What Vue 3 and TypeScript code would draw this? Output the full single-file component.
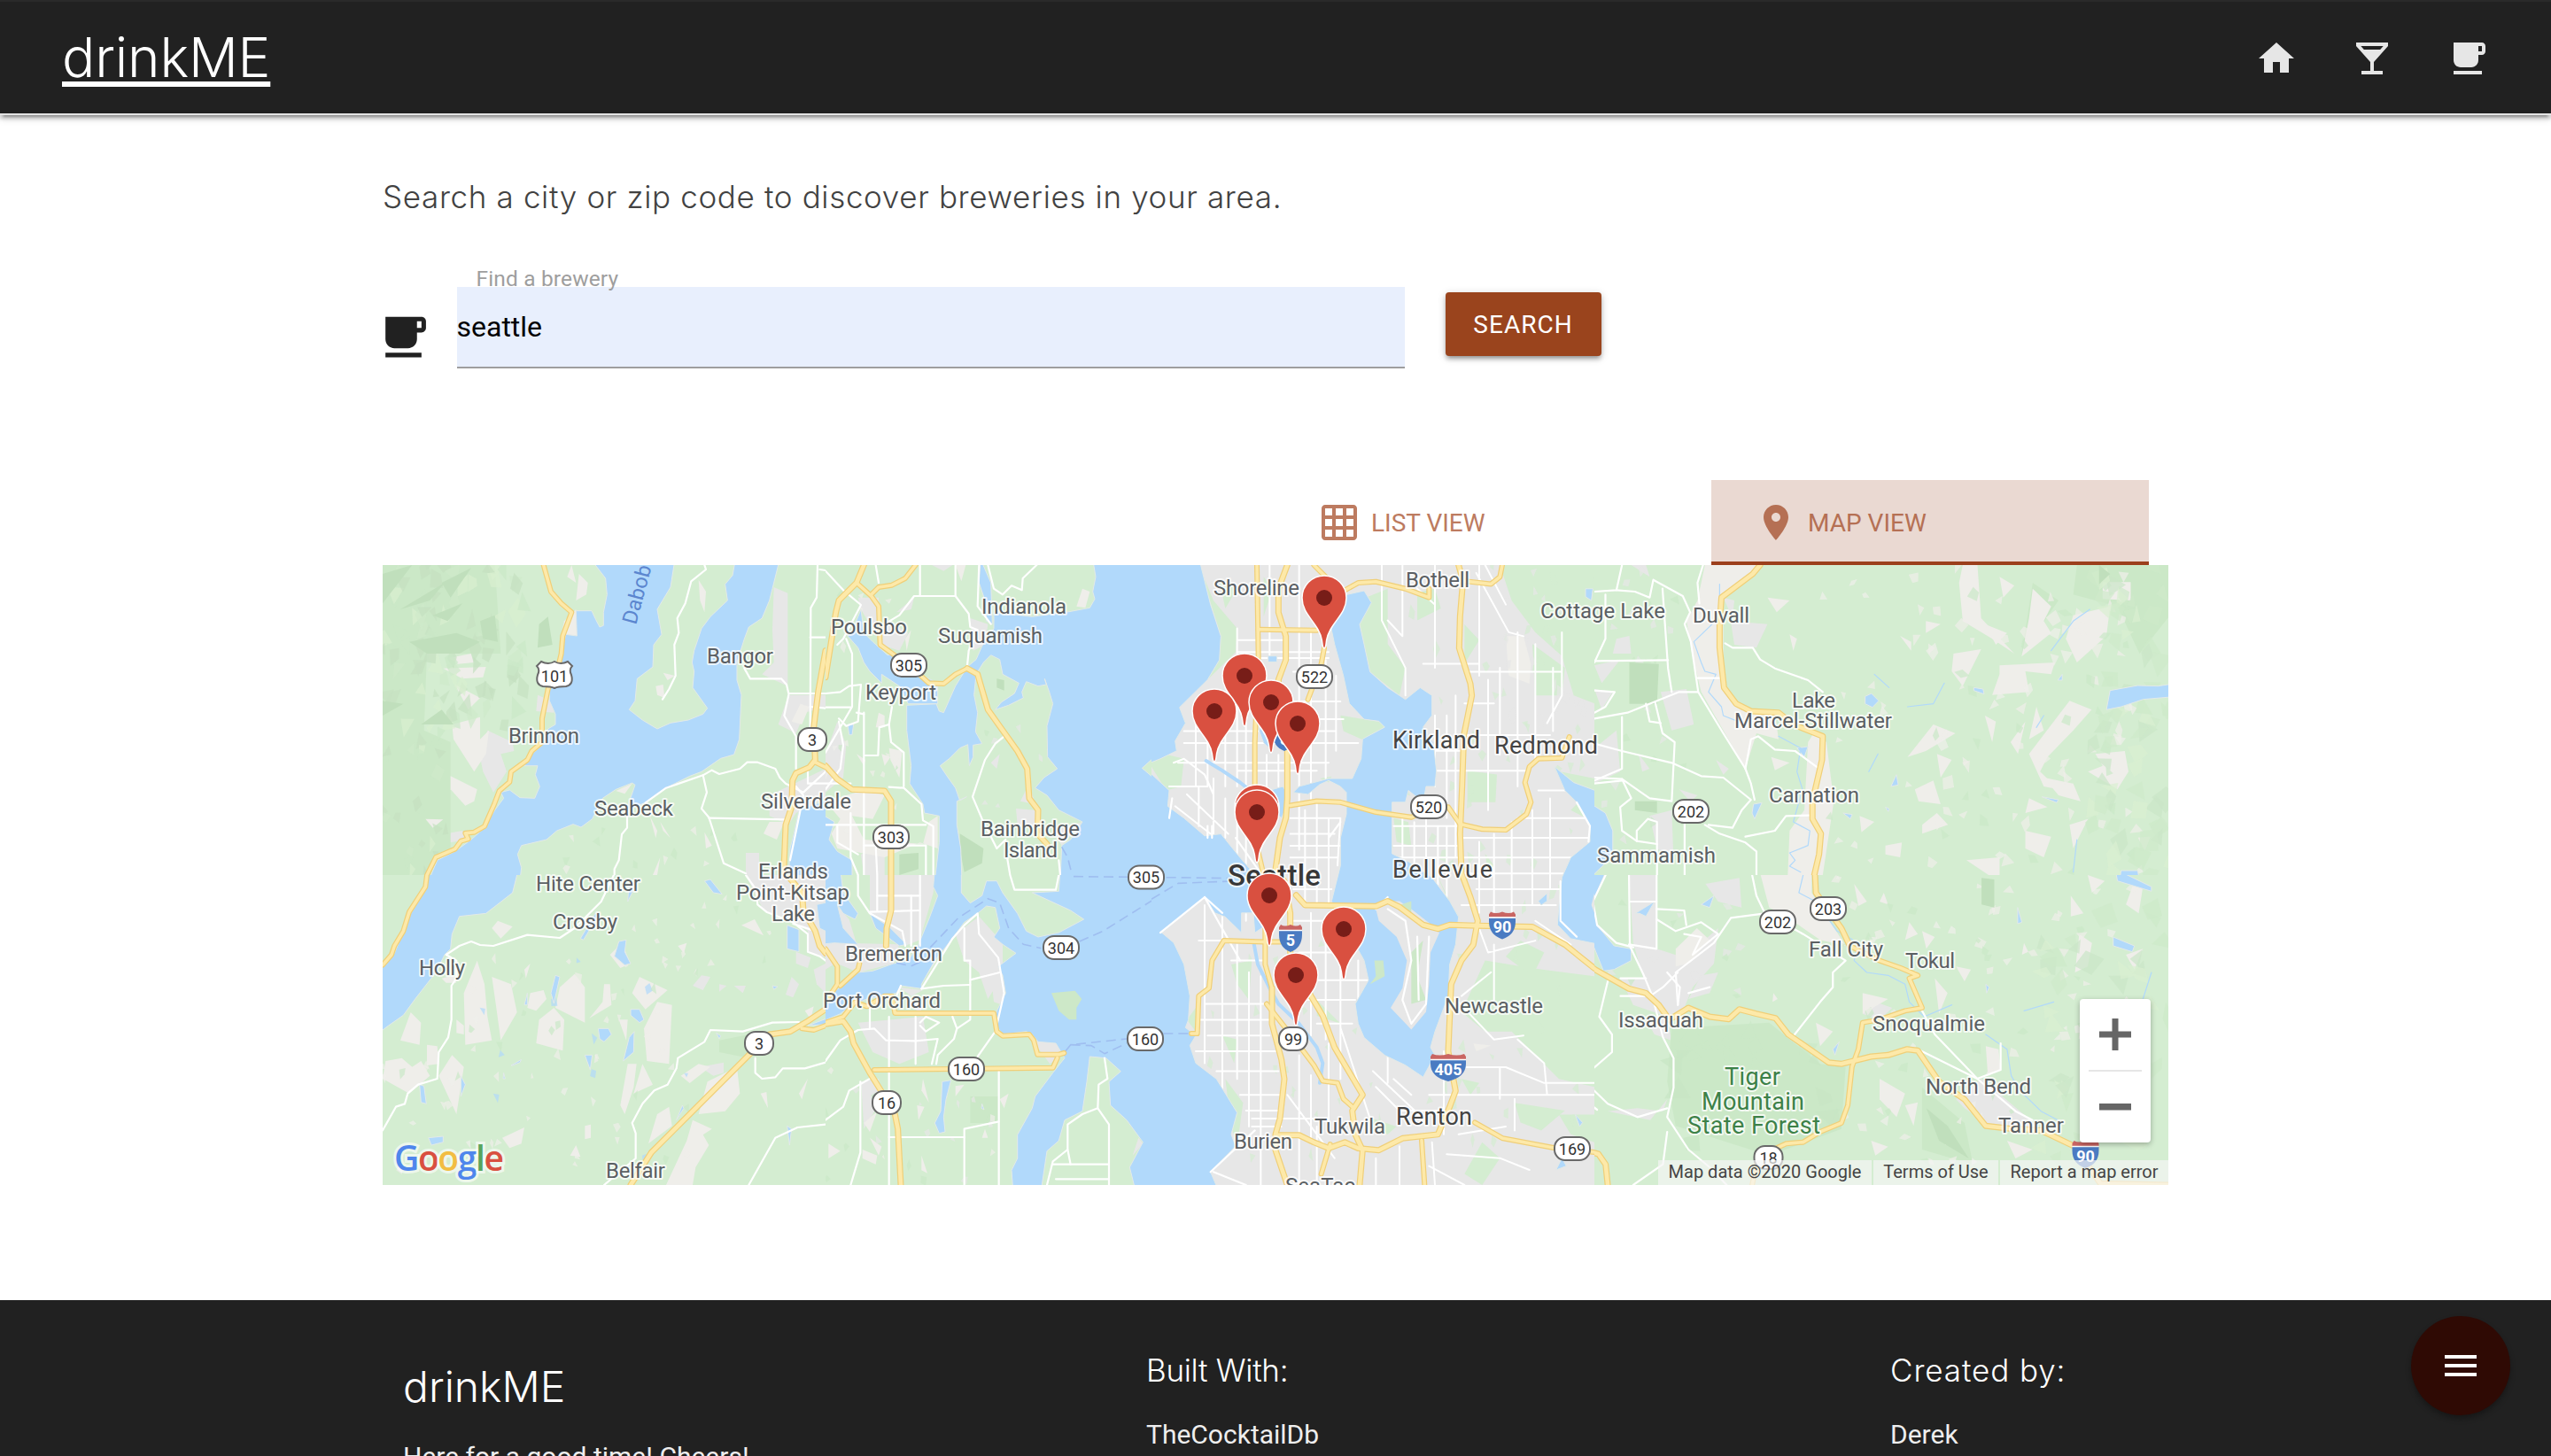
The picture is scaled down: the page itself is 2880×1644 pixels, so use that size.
<script setup lang="ts">
interface Tile {
  x: number
  y: number
  w: number
  h: number
  vw: number
  vh: number
  urban: string[]
  park: string[]
  dark: string[]
  sand: string[]
  streets?: string
  water: string[]
  canal?: string
  isle: string[]
  islePark?: string[]
  minor: string[]
  major: string[]
  highway: string[]
  ferry: string[]
}
interface Patch {
  d: string
  fill: string
}

// Street-level geometry, one entry per map tile, in tile-local units.
const tiles: Tile[] = [
  {
    x: 0, y: 0, w: 500, h: 350, vw: 1500, vh: 1050,
    urban: ['355,560 440,600 445,630 400,640 420,700 375,770 340,700 330,650', '525,440 570,460 580,500 520,495', '1325,75 1372,95 1372,410 1285,370 1325,330 1320,220', '1375,440 1500,440 1500,480 1430,500 1400,570 1340,540', '1310,780 1500,690 1500,790 1400,840 1375,880 1310,850', '1230,975 1275,975 1275,1050 1230,1050', '215,910 270,900 290,930 225,940'],
    park: ['0,0 380,0 400,300 150,300 140,560 230,600 230,1050 0,1050'],
    dark: ['0,30 100,0 0,130', '60,150 210,60 160,120', '200,60 300,10 230,110', '90,260 250,230 330,260 260,300 150,300', '330,190 380,170 390,260 340,250', '530,200 560,175 575,270 525,280', '0,460 70,470 0,510', '130,540 200,490 240,540', '170,170 270,130 220,190'],
    sand: ['640,0 655,60 625,40', '665,30 695,60 690,100 655,120', '615,190 655,150 660,240 605,235', '225,315 300,300 310,330 255,335', '205,350 350,345 340,380 270,385', '245,405 330,450 290,490', '235,540 330,515 330,610 280,640 360,560 350,640 310,700 240,590', '230,715 320,760 310,800 280,815 230,760', '145,860 205,862 170,890', '1070,50 1095,90 1090,160 1075,120', '925,410 950,405 955,450 930,440', '950,365 990,375 965,390', '845,740 820,775 790,765', '1310,870 1360,870 1335,930 1290,910', '940,870 975,925 950,900', '905,850 930,900 925,925', '915,1050 940,990 930,1050', '1090,905 1115,950 1095,960', '1415,470 1445,480 1420,540 1385,530'],
    water: [
      '705,0 755,45 760,100 748,160 748,205 735,210 722,185 708,155 655,155 658,240 620,235 605,300 600,330 565,420 565,460 585,505 585,540 560,555 545,580 540,610 500,645 480,680 525,680 517,710 532,750 515,790 465,788 430,762 400,770 410,790 380,830 345,890 300,930 245,970 185,1000 155,1050 465,1050 470,1025 457,980 470,950 555,930 590,900 645,878 672,888 710,860 745,790 790,760 845,738 855,745 825,830 890,805 960,755 1040,715 1080,700 1145,655 1190,642 1208,590 1215,440 1200,390 1200,330 1225,250 1240,210 1285,180 1310,120 1320,80 1345,0 1195,0 1185,35 1160,65 1168,120 1110,175 1080,215 1055,290 1048,330 1055,360 1050,415 1100,485 1085,505 1035,525 975,535 930,555 880,525 835,490 855,460 862,385 915,345 918,270 945,235 930,150 975,75 990,0',
      '1500,790 1410,830 1395,900 1380,960 1375,1050 1500,1050',
    ],
    isle: [],
    minor: [
      '1090,0 1095,15 1045,55 1025,130 998,180 1003,230 988,270 992,375 970,420 948,455',
      '1473,0 1470,110 1450,145 1448,550', '1448,245 1500,245', '1480,15 1500,18', '1225,350 1245,385 1350,385 1368,405 1375,435 1500,435',
      '1375,440 1360,510 1400,580 1400,690', '890,805 960,755 1085,712 1115,695 1140,708 1210,690 1235,668 1270,668 1330,690 1345,720 1365,740 1425,770 1500,700',
      '1085,712 1098,770 1080,825 1105,855 1155,1010 1230,1045', '1105,857 1365,862', '828,850 828,890 810,912 800,1000 785,1030 785,1050', '1448,480 1500,485', '1440,700 1440,740 1500,740', '1400,750 1425,780 1380,1000',
    ],
    major: ['545,0 570,90 605,130 640,160 610,240 605,300 598,330 560,420 540,520 540,600 505,630 490,660 435,700 430,735 395,765 378,810 345,885 310,905 280,908 290,928 265,935 245,962 180,990 150,1050', '1465,668 1500,685'],
    highway: ['1500,290 1475,430 1460,550 1465,660 1445,685 1400,705 1388,730 1385,820 1365,880 1358,1050'],
    ferry: [],
  },
  {
    x: 500, y: 0, w: 500, h: 350, vw: 1500, vh: 1050,
    urban: ['110,110 180,110 180,210 230,200 280,230 250,290 190,270 120,150', '40,530 70,610 60,720 0,770 0,640', '240,160 300,110 290,150', '490,180 550,200 540,270 500,290', '645,825 710,830 715,890 650,880', '120,980 200,950 200,1050 130,1050', '1280,0 1500,0 1500,1050 1430,1010', '560,670 590,640 580,690', '660,800 690,740 710,810', '770,900 870,870 800,950', '360,0 430,0 400,20'],
    park: ['1310,100 1390,130 1400,300 1340,400 1345,200'],
    dark: ['580,385 605,390 605,425 580,415', '250,980 315,975 315,1030 250,1050', '455,910 535,960 530,1010 470,1040 455,960', '1375,170 1410,175 1410,210 1380,205'],
    sand: ['0,800 140,760 200,780 160,860 90,850 130,930 330,945 350,870 380,850 380,960 320,940 200,990 40,960 20,910 50,860', '440,0 475,0 460,55', '180,500 200,510 200,550 170,550', '215,620 260,630 250,720 220,660', '105,640 135,660 130,680', '190,640 220,650 200,680', '270,250 290,220 275,290', '870,80 895,90 880,145 850,140'],
    water: [
      '905,0 915,40 905,90 912,115 895,145 825,158 700,175 570,160 570,215 530,275 510,320 480,345 440,410 400,500 385,495 375,470 275,475 275,560 290,680 285,740 330,810 335,840 385,850 385,940 370,1050 462,1050 458,960 445,880 445,800 478,785 455,798 440,755 415,720 388,680 420,655 455,620 482,608 487,680 500,650 500,610 530,605 508,565 515,500 503,440 510,370 535,330 560,305 590,320 600,370 655,400 640,435 595,465 575,490 620,475 670,450 665,430 680,395 720,410 748,405 742,385 758,430 770,470 750,545 752,650 785,690 740,720 710,755 750,780 790,830 870,870 830,930 800,950 795,1050 1500,1050 1360,945 1290,880 1240,885 1175,845 1150,810 1150,770 1110,720 1072,688 1120,645 1185,630 1195,570 1215,510 1200,485 1260,430 1320,380 1340,270 1325,180 1305,130 1310,60 1280,20 1280,0',
      '120,150 130,230 160,260 210,305 250,300 320,370 380,400 380,470 280,470 250,410 190,370 190,400 150,360 130,330 110,280 75,240 100,200',
      '525,0 560,60 565,200 545,190 540,120 520,60', '0,840 30,870 12,930 40,970 90,1000 90,1050 0,1050', '75,540 95,540 90,575 80,575',
    ],
    isle: [],
    minor: [
      '320,0 320,105', '440,0 440,105 300,105 250,170 200,200', '440,105 485,165 490,210 515,220 485,290 480,340', '550,0 570,80 600,100 630,70 665,85 668,45 715,0', '520,0 515,140 560,200', '170,0 180,60', '0,20 60,85 120,135 60,250 40,270',
      '70,250 90,300 90,480 0,635', '0,435 50,430 80,410 120,405 110,530 70,545 45,520', '0,482 85,482', '130,500 130,1050', '105,500 130,505', '45,530 60,610 50,690 0,760', '225,480 215,540 182,550 178,645 135,645', '215,540 222,600 265,635 265,750',
      '215,752 265,755 325,810 330,865 365,885 365,1050', '605,580 575,605 540,660 498,785 530,860 580,960 610,930', '0,880 340,880', '0,740 85,740', '130,950 340,950 340,1050', '615,990 625,1050', '790,1000 795,1050', '85,840 85,990 110,1050', '170,950 175,1050', '40,880 40,940 110,980',
    ],
    major: ['155,100 180,75 225,68 270,45 305,0', '105,60 155,105 180,140 185,270 240,310 290,345 350,400 400,402 440,370 480,350'],
    highway: ['130,0 105,60 45,120 35,160 0,380', '480,350 515,370 550,490 600,560 650,630 683,690 690,790 720,830 718,910 750,945', '0,680 40,725 90,760 200,765 222,800 222,1050'],
    ferry: ['800,955 820,990 835,1050'],
  },
  {
    x: 0, y: 350, w: 500, h: 350, vw: 1500, vh: 1050,
    urban: ['1230,0 1500,0 1500,280 1440,260 1440,190 1380,150 1290,120', '1400,260 1450,280 1440,315 1400,300', '1385,345 1410,370 1390,415 1365,405', '1460,320 1500,300 1500,400 1470,370', '1080,340 1110,345 1085,390 1050,375', '1075,650 1155,635 1155,670 1120,680', '1140,370 1165,375 1140,395', '1190,375 1230,375 1220,400'],
    park: ['1140,560 1240,540 1240,620 1140,600'],
    dark: [],
    sand: ['320,290 345,370 355,480 370,560 280,575 275,400', '370,345 435,370 455,465 400,560 385,450', '650,335 685,380 685,500 585,450 600,380', '870,345 965,390 890,455 845,400', '930,430 980,440 970,640 895,630 885,520', '580,450 615,490 610,595 520,570 530,490', '235,610 275,650 250,810 190,680', '1100,700 1200,650 1210,740 1160,800 1070,810', '95,465 130,500 125,575 60,560', '10,630 65,620 100,650 130,630 160,680 90,740 0,690', '370,180 390,155 440,175 400,215', '750,370 770,370 775,440 700,485 745,430', '500,400 545,390 555,420 520,460 490,450', '770,270 810,230 840,300 805,315', '405,890 480,855 470,910 430,925', '930,810 970,785 980,850 900,910', '1050,830 1115,860 1085,880 1105,915 1060,990 1050,1050 960,1050 1030,900', '1010,680 1070,640 1110,650 1040,705', '1215,170 1260,150 1290,205', '1280,740 1300,735 1305,790', '800,490 830,490 825,560', '830,640 860,640 850,720 820,810 805,780', '880,640 915,710 850,740', '150,575 185,580 190,640 150,645', '250,490 275,510 275,540 250,535', '1430,460 1460,445 1450,490', '1410,740 1440,690 1420,760', '1000,240 1030,230 1020,265', '200,350 240,340 250,365 215,365', '655,915 670,955 635,950', '480,320 500,300 485,350', '685,850 705,845 705,890 685,895'],
    water: [
      '155,0 460,0 440,60 350,130 260,140 235,200 230,250 210,270 180,330 110,420 70,475 20,510 0,540 0,310 40,265 95,130 150,45',
      '1370,170 1410,185 1410,260 1370,250', '1470,100 1500,90 1500,200 1480,180', '1440,510 1500,480 1500,505', '800,225 825,220 820,260 840,300 820,305 785,275', '730,520 765,520 775,540 750,565 735,555', '840,455 870,455 885,490 870,500 840,475', '585,340 600,345 580,435 570,400', '835,550 852,530 850,600 815,630', '685,610 710,610 703,660', '125,710 140,715 148,775 130,770', '1090,20 1110,15 1150,65 1120,60', '155,890 205,885 205,905 165,915', '1320,375 1338,378 1325,388', '435,645 470,625 465,635 440,645', '490,400 490,440 480,440', '720,130 735,130 680,220 670,215', '835,20 850,50 830,90', '1015,780 1020,790 995,830', '1130,535 1145,545 1140,555', '265,680 280,710 265,750', '410,670 415,690 408,690', '1370,850 1385,860 1378,915',
    ],
    isle: [],
    minor: [
      '783,0 740,90 650,180 600,213 490,203 375,240 330,237 300,225 260,240 215,270 250,290 250,350 233,375 233,490 222,550 190,600 185,690 120,710 85,740 75,775 45,785 0,865',
      '1410,498 1320,500 1220,530 1110,525 1090,565 1000,620 995,655 965,710 920,730 880,775 845,840 857,875 857,960 750,1050',
      '1262,620 1262,670 1285,690 1330,685 1355,655 1430,655 1500,635', '1240,1050 1330,890 1405,855 1500,845', '1230,0 1265,50 1270,100 1300,125 1390,160 1440,200 1440,260 1480,275 1500,290', '1390,165 1450,185',
    ],
    major: ['150,0 145,40 90,125 70,190 40,240 30,270 0,305', '1420,520 1460,525 1500,510'],
    highway: ['1370,0 1420,60 1425,120 1465,190 1480,240 1500,265', '1500,455 1440,495 1380,530 1310,540 1230,620 910,940 840,1050'],
    ferry: [],
  },
  {
    x: 500, y: 350, w: 500, h: 350, vw: 1500, vh: 1050,
    urban: ['150,0 370,0 365,60 320,220 270,240 150,130', '0,60 80,150 110,250 0,320', '60,230 250,235 230,300 110,330 40,300', '440,200 520,140 600,230 600,340 550,420 520,330 470,290', '110,500 330,480 350,600 250,640 160,600', '250,380 330,390 290,410', '560,330 610,350 600,440 570,430', '1130,190 1285,70 1360,120 1500,120 1500,1050 1310,1000 1380,900 1395,790 1240,600 1230,350', '700,560 780,570 810,600 760,640', '120,700 180,690 190,760 130,860', '1060,890 1075,910 1040,950', '160,520 220,500 210,560', '280,430 330,440 320,470'],
    park: ['1340,170 1370,290 1360,330', '1380,720 1430,700 1420,850 1380,890', '490,750 585,750 585,840 490,840', '1225,460 1250,460 1240,510'],
    dark: [],
    sand: ['355,280 375,290 330,360', '330,690 350,770 325,730', '10,910 50,935 10,960', '150,890 190,920 180,950', '125,930 175,950 170,980 125,960', '310,780 335,785 315,830', '440,715 470,710 440,750', '130,840 175,800 150,870', '1345,330 1370,340 1350,360', '325,950 345,1010 325,1000', '590,760 620,740 605,790', '540,860 550,890 530,890'],
    water: [
      '370,0 460,0 460,60 490,95 530,70 545,20 580,20 600,60 650,130 680,190 720,210 790,195 875,150 830,120 700,60 790,55 795,0 1500,0 1500,110 1440,125 1440,200 1410,205 1395,125 1350,150 1330,110 1285,70 1250,100 1135,190 1180,240 1215,300 1230,380 1240,450 1220,490 1250,520 1235,575 1260,640 1330,700 1395,790 1380,850 1360,880 1365,960 1310,1005 1400,1050 1050,1050 1030,990 1075,905 1020,830 965,780 960,700 1000,665 950,620 895,615 885,700 870,800 810,830 790,900 750,935 730,1050 635,1050 630,1000 650,960 650,880 700,790 710,750 770,670 810,620 780,570 720,565 700,540 680,530 600,540 570,500 580,460 610,400 600,340 585,310 645,265 600,235 570,210 590,180 575,110 545,105 515,130 470,160 430,215 370,290 325,370 325,385 255,375 240,400 140,420 90,440 50,470 0,500 0,430 50,380 110,330 160,325 230,300 280,290 315,235 350,150 380,70 365,40',
      '0,0 50,0 60,60 110,130 100,150 60,130 40,100 60,180 110,235 30,230 0,235', '150,130 220,180 275,235 250,240 170,180', '395,700 425,695 408,760 400,820 405,870 385,875 370,840 390,800', '530,775 537,795 528,790',
    ],
    isle: [],
    islePark: ['765,400 845,392 868,420 850,450 850,490 825,490 790,460'],
    minor: [
      '215,480 215,1050', '215,888 470,888', '470,1050 470,860 587,835', '587,665 587,1050', '0,630 50,560 110,525 165,520 205,560 305,562 380,555 360,640', '305,480 305,640', '325,385 400,375 490,372', '325,385 430,215 470,170 515,130 520,200 585,280 605,400 575,530 515,615',
      '470,180 470,290 490,290 490,490 445,520 435,555 380,610 375,640', '430,480 445,520', '490,355 590,330', '118,700 118,940 85,1050', '150,690 80,730 60,785 0,830', '945,620 955,690 925,710 922,790 870,810 820,845 820,930 770,970 750,1050', '922,790 960,845 960,1050', '770,980 960,980', '820,930 830,980', '780,1030 960,1030',
      '110,0 110,70 150,130 260,190 270,240', '175,0 175,120', '150,125 320,120', '175,70 320,70', '290,70 290,240', '320,0 320,240', '150,450 150,520', '320,500 340,480 385,500 340,530 320,510', '625,0 640,50 780,50 790,0', '255,375 240,410',
    ],
    major: ['0,250 40,310 40,370 0,430', '115,300 110,320 50,375', '165,660 770,653 785,620', '0,500 60,480 100,430 140,445 200,410 225,410 235,468 570,468 580,530 600,545 690,540 705,560 718,608 790,608 808,603', '1235,540 1255,535 1258,460 1270,400 1300,385 1305,290 1345,225 1410,225 1500,225'],
    highway: ['222,0 222,120 207,180 205,240', '0,505 60,495 85,530 95,570 150,670 200,750 235,810 245,860 255,1050'],
    ferry: ['355,245 450,145 550,80 590,95 620,180 670,235 730,248', '860,225 940,190 1100,90 1200,35 1360,20', '840,5 1360,10', '810,600 830,575 1020,555', '1145,540 1235,538', '830,575 900,578 945,605 1020,570', '240,298 290,308 330,290'],
  },
  {
    x: 1368, y: 0, w: 650, h: 350, vw: 1563, vh: 1050,
    urban: ['60,250 95,240 100,300 50,300', '0,340 70,320 20,400', '180,430 250,420 270,540 210,560', '0,620 60,560 70,700 0,740', '150,850 210,830 215,1000 170,960', '370,190 470,200 440,280 380,270', '350,110 380,120 375,180', '0,420 50,430 20,490', '330,660 365,690 350,710', '100,0 140,0 150,40', '230,760 280,780 260,800', '120,640 150,690 130,700'],
    park: ['1310,0 1563,0 1563,170 1480,300 1420,140 1300,100', '1190,60 1260,120 1160,300'],
    dark: ['95,330 175,335 170,470 95,470', '110,800 170,800 170,840 110,830', '1370,0 1400,30 1370,65'],
    sand: [
      '300,0 455,0 350,110 350,400 400,490 490,500 500,590 440,570 410,690 350,560 290,430 265,300 250,190 280,120', '600,560 630,600 650,800 620,1050 525,1050 530,900 570,830 580,600', '1380,58 1456,58 1456,120 1380,115', '1000,0 1040,0 1050,180 1140,300 1080,250 1000,190 990,60', '1190,80 1240,140 1220,190 1240,230 1160,310 1180,180', '1300,170 1400,140 1390,240 1310,330 1280,250',
      '975,300 1050,285 1000,410 970,360', '1100,340 1250,330 1240,370 1170,360 1180,430 1080,440 1100,370', '920,540 980,570 900,630 850,650', '870,760 920,730 940,810 880,800', '1200,480 1220,560 1180,590', '1290,460 1350,490 1300,560 1230,650 1210,700 1260,760 1220,750 1180,640', '1060,510 1090,530 1080,600', '930,640 970,660 940,720', '470,110 530,120 495,160',
      '1170,900 1240,920 1220,990 1170,960', '890,880 930,840 960,880 890,910', '790,950 835,940 830,990 790,980', '1010,1000 1100,990 1100,1050 1070,1050', '1290,880 1340,860 1300,960', '1180,790 1230,820 1170,840', '900,190 940,200 900,230', '830,240 860,260 860,290', '530,235 550,250 540,290', '1360,640 1440,630 1450,700 1420,760 1340,700 1380,680', '480,650 530,670 490,695', '720,850 760,870 725,905', '1130,600 1170,530 1150,640', '1060,200 1120,230 1090,270', '1100,40 1140,70 1110,110', '1220,720 1300,740 1320,800 1260,780',
    ],
    water: ['1400,425 1475,408 1530,410 1563,400 1563,445 1490,455 1430,480 1390,490', '0,800 30,840 50,900 50,970 30,1010 0,1050', '735,445 752,435 772,460 755,482 735,470', '1030,415 1055,420 1058,437 1030,425', '820,710 825,745 805,750', '432,810 455,805 435,860 428,840', '1430,1035 1475,1035 1480,1050 1425,1050', '675,840 700,845 695,860', '1215,785 1260,795 1255,805', '1270,370 1270,390 1258,390', '550,620 580,615 570,650', '790,820 800,825 798,835'],
    canal: 'M340,65V120M320,200L270,260 L290,330 L300,360 L330,370 L310,430 L345,480 L350,510 L390,530 M500,580L560,620 L550,700 L565,760 L540,870 L585,900 L580,950 L530,975 L545,1000 L530,1020 L560,1040 M1345,150 L1300,190 L1240,290 M950,400 L920,470 L850,480 M760,370 L800,415 M1310,930 L1300,1040 M770,640 L745,700 M1220,510 L1200,550',
    isle: [],
    minor: [
      '75,0 60,85 0,90', '60,85 110,90 150,110 160,50 240,105 260,160 245,200 262,260 282,430 350,570 410,690', '185,80 200,350 210,430', '0,325 200,322', '280,430 230,430 90,500 0,520', '0,605 75,630 210,670 290,715 350,720 425,795 400,830 375,890 310,880', '75,515 75,690 0,730',
      '165,465 185,570 218,600 210,800 150,790 75,725 100,790 70,820 75,900 115,935 170,945', '355,265 375,280 430,280 450,320 490,350 580,390 620,430', '410,690 425,590 445,580 490,625 545,630 605,685', '410,690 425,740 435,795', '300,880 340,910 410,940 440,970 440,1050', '410,920 490,900 520,850 585,848', '245,870 245,1050',
      '295,0 280,60 285,130', '280,383 340,383', '30,100 30,250 0,330', '140,470 150,530 180,535', '0,425 55,430 30,480 0,500', '115,935 115,900 145,860 170,870 170,1050', '0,720 75,725', '75,730 0,740',
    ],
    major: [],
    highway: ['450,0 430,30 345,110 340,200 340,280 352,415 385,470 425,495 500,500 540,540 620,580 618,660 592,800 592,860 615,910 610,980 597,1050'],
    ferry: [],
  },
  {
    x: 1268, y: 350, w: 750, h: 350, vw: 1564, vh: 1050,
    urban: ['0,0 128,0 128,190 210,320 130,300 90,380 0,380', '290,0 355,0 355,250 420,280 500,180 490,300 440,380 420,450 380,480 330,380 300,230', '270,350 340,350 380,480 300,440', '470,30 550,10 555,110 500,90', '1060,760 1120,690 1260,860 1130,840 1080,790', '310,790 370,800 380,760 340,830 240,800', '0,590 50,620 60,700 0,690', '840,470 870,430 910,450 880,490', '460,340 500,330 480,400 430,420', '330,490 380,480 390,560 350,540'],
    park: ['390,520 500,510 620,500 740,640 800,650 790,860 620,950 400,850 380,700', '0,430 200,500 160,640 0,560', '980,720 1080,840 1100,980 980,930'],
    dark: ['1120,10 1150,15 1150,110 1120,100', '990,790 1040,850 1090,960 1020,900'],
    sand: ['600,0 720,0 720,60 800,240 740,220 650,130 620,110', '820,30 850,90 830,105', '1010,350 1040,400 1020,470', '1350,200 1380,230 1370,310 1340,330', '1130,580 1160,590 1165,660 1135,680', '950,160 970,200 940,220', '980,190 1010,210 990,250', '840,400 900,420 840,470', '880,690 940,740 920,820 880,760', '1480,20 1500,40 1490,130 1460,100', '400,250 450,180 480,220 430,300 400,310', '1060,310 1095,320 1080,360', '1330,70 1360,130 1330,140', '1130,30 1150,50 1120,90', '730,500 770,530 740,580', '860,900 900,920 870,950', '1180,900 1240,930 1200,960', '940,780 970,770 960,850', '1220,230 1230,260 1215,270', '630,400 640,420 628,430', '1460,270 1500,250 1480,320', '1370,0 1410,20 1380,60', '890,60 900,100 880,90'],
    water: ['128,0 238,0 205,90 215,170 255,240 295,250 295,290 255,320 230,325 205,235 150,215 124,190', '75,80 98,65 95,95 75,95', '305,130 350,90 330,140 315,130', '1435,0 1520,40 1520,55 1440,20', '1430,210 1480,240 1475,260 1430,240', '1205,110 1215,160 1205,165', '460,100 490,70 480,110', '1130,370 1138,380 1132,400', '190,810 203,850 195,850', '770,590 785,565 775,610'],
    canal: 'M700,0 L690,60 L730,90 L780,190 L830,230 L820,290 L850,330 L900,340 L940,370 L950,430 L985,480 L1050,440 M1130,540L1180,590 L1190,680 L1210,730 L1260,800 L1300,830 M1520,330 L1500,420 M1290,430 L1220,460',
    isle: [],
    minor: [
      '580,0 590,70 610,130 530,145 490,230 400,330 405,440', '290,0 292,240 325,340 345,410 370,550 395,620 395,720 380,820 430,930 480,990 520,1050', '355,0 355,250 290,235', '650,160 700,200 800,290 770,330 770,380 740,430 680,540', '0,575 60,620 140,700 190,705 240,775 310,820 380,790', '0,765 190,768 215,795',
      '60,765 50,900', '170,700 250,600 250,540 220,480 240,360', '980,460 1010,540 1110,690 1200,800 1240,830', '970,590 1110,690', '0,650 90,660 93,765', '1165,570 1165,660 1110,690', '235,0 205,90 215,170 260,230 300,245', '355,115 420,120 425,170', '355,150 400,190 460,160 500,200 440,270 460,210 420,200', '405,330 370,380 340,410', '270,350 330,350', '270,410 340,410', '430,400 480,380', '380,870 370,980 300,1050', '0,210 90,230 100,310 170,320 190,350 150,355 120,310', '0,370 60,400 100,310', '95,0 95,170', '50,0 50,60 110,60', '0,60 50,60 40,220', '292,90 355,90', '405,440 410,380 380,330',
    ],
    major: ['600,950 660,910 700,905 740,870 790,840 805,780 815,650 830,590 840,500 880,490 940,460 980,450 965,400 950,350 970,340 930,315 880,290 810,240', '0,895 100,925 160,935', '580,1050 590,980'],
    highway: ['728,0 730,60 790,180 810,240', '20,175 60,178 140,240 210,320 290,385 330,400 360,440 385,490 430,450 480,480 525,488 550,455 590,470 635,485 665,540 760,635 790,640 860,615 900,610 945,590 970,595 1020,700 1080,760 1130,850 1180,858 1260,865 1340,920 1400,1045 1564,1050', '200,938 218,945 235,980 240,1050'],
    ferry: [],
  },
  {
    x: 868, y: 0, w: 500, h: 700, vw: 1500, vh: 1568,
    urban: ['0,0 1500,0 1500,1568 0,1568'],
    park: [
      '160,0 210,90 290,160 285,220 190,290 235,180', '0,470 110,490 100,560 50,570 0,510', '700,90 800,60 800,200 860,260 840,330 740,270 705,150', '1180,0 1500,0 1500,350 1430,330 1390,230 1300,170 1220,90', '640,380 800,400 740,450 650,420', '1070,520 1170,530 1165,600 1070,600', '1130,1000 1290,1020 1500,1040 1500,1320 1380,1300 1220,1180 1130,1180 1050,1130', '900,70 960,60 980,110 900,140',
      '820,640 870,650 880,710 830,700', '1370,520 1500,540 1500,570 1400,560', '1290,200 1400,260 1390,330 1300,330', '120,1150 150,1120 150,1180', '240,1190 290,1200 280,1260', '1230,1360 1400,1380 1320,1430 1250,1410', '270,1010 340,1000 330,1100 290,1060', '1420,620 1500,560 1500,650', '1060,150 1110,190 1060,250', '380,30 410,60 380,130', '1130,730 1160,760 1140,780', '570,540 610,535 600,550',
      '750,1400 830,1420 800,1440 740,1430', '1120,1460 1180,1500 1120,1568 1060,1540', '940,740 1010,850 1050,900 1000,840', '1250,950 1330,980 1290,1040 1200,990', '230,40 290,60 250,110', '1050,1300 1110,1310 1080,1340', '560,1100 640,1160 560,1140', '1380,1390 1500,1390 1500,1460 1420,1440', '250,1300 310,1360 290,1470 270,1420',
    ],
    dark: [],
    sand: ['1200,180 1260,180 1285,250 1280,300 1210,280', '1090,1210 1150,1215 1100,1230'],
    streets:
      'M290,160V560M320,360V900M400,0V240M500,0V720M540,160V600M590,240V540M625,280V470M150,400V560M190,360V560M250,390V560M390,480V560M430,480V560M110,420H620M110,450H700M90,500H600M290,220H600M290,190H460M290,235H600M480,270H610M480,345H640M480,390H650M290,520H560M120,580L260,680M110,560H190M160,560V660M210,540V680M250,590V690M290,620V740M80,610L200,680M60,560L190,560M470,640H640M470,680H620M470,710H640M470,740H630M520,620V860M560,600V860M600,640V860M640,640L630,760M480,820H610' +
      'M180,860V1260M160,950H380M240,860V1360M290,960V1300M330,1030V1420M270,1000H380M180,1110H380M160,1150H400M190,1190H400M150,1230H420M220,1280H430M300,1340H440M320,1380H440M340,1420H440M370,1040V1568M540,880V1190M590,900V1200M640,950V1300M700,1000V1140M470,1050H735M520,1100H690M560,1160H680M480,900H620M500,980H680M600,1210V1420M540,1290V1460M500,1240V1568M560,1420V1568M340,1400H600M460,1340L620,1500M640,1170L740,1400' +
      'M780,0V140L860,260V330M850,0V180L800,140M900,60L960,100V260M960,0V240M1110,0V280M920,250H1110M1070,270H1390M1140,290V620M1180,260V480M1240,170V560M1300,200V490M1360,260V420M1390,170V330L1340,400M1100,20L1210,170L1260,180M1130,0L1200,100M960,380V560M1000,380V640M1030,330V740M960,470H1050M960,520H1100M1060,430H1350M1060,520H1280M1060,350H1160M820,660H1045M820,710H1050M850,640V740M890,650V780M930,640V800M970,660V840M1000,660V870M830,740H1500M1050,690H1480M1110,700V880M1160,680V900M1220,650V900M1290,620V860M1350,590V820M1060,780H1400M1100,820H1380M1050,860H1370M1310,570H1440M1240,640H1480' +
      'M1110,920L1140,980L1300,950M1020,1090L1160,1200L1260,1190M990,1230V1440M940,1340H1500M880,1380H1000M760,1320L840,1380H940M820,1300L880,1340M800,1240V1310M750,1280L920,1400M1060,1270L1200,1270L1330,1310L1500,1310M1180,1270V1350M1230,1350V1430M1000,1490L1180,1500L1280,1530M950,1460L960,1568M1040,1440L1200,1420M760,1500V1568M840,1470V1568M940,1520L1060,1568M1240,1200L1330,1260L1340,1340M1160,960V1100M1150,1030L1050,1090M1300,900L1420,960',
    water: [
      '0,0 160,0 200,100 235,180 230,240 190,290 95,360 115,400 80,445 85,470 30,490 0,505 0,515 60,570 55,610 110,640 180,685 235,680 300,740 370,800 400,850 400,905 350,930 345,880 305,880 305,930 250,890 215,880 180,840 130,870 35,930 75,955 110,1010 130,1090 125,1150 115,1170 150,1190 130,1215 150,1260 220,1300 290,1385 270,1440 285,1470 200,1535 230,1568 0,1568',
      '600,60 660,75 720,65 745,95 705,150 720,200 740,270 800,310 860,340 910,310 950,330 950,380 920,410 955,450 965,520 960,560 930,560 920,600 870,570 860,600 815,600 815,730 870,750 950,790 1010,850 1040,890 1030,960 1010,1010 1005,1090 960,1180 945,1220 960,1240 920,1295 860,1265 790,1240 720,1195 700,1160 690,1110 735,1050 720,1000 690,960 640,900 610,850 640,760 640,690 660,630 660,575 640,560 600,545 570,555 530,580 480,575 500,560 600,540 680,540 710,490 715,440 790,410 770,395 720,390 670,350 650,280 620,200 600,130',
      '1365,510 1430,550 1500,575 1500,960 1420,945 1375,910 1380,860 1390,790 1420,740 1485,700 1485,660 1440,600 1400,570', '395,230 425,230 425,245 395,245', '370,400 400,400 410,470 380,450 365,420', '400,570 445,560 470,590 440,640 415,620', '1310,850 1340,830 1340,850 1320,860', '1370,1530 1390,1500 1405,1520', '1470,60 1495,60 1490,90 1470,80', '1435,1390 1460,1410 1450,1420',
    ],
    canal: 'M185,495L240,520L300,550L360,585L440,590M345,950L360,1010L400,1070L430,1110L500,1160L560,1220L580,1260L570,1310',
    isle: ['760,870 790,850 840,850 880,870 940,905 975,930 945,980 940,1060 930,1130 880,1175 810,1120 850,1070 865,1000 830,940 770,900', '1500,830 1490,860 1500,880'],
    islePark: ['755,1000 785,1000 790,1040 740,1060 760,1040', '840,860 880,850 880,890', '880,980 920,950 900,1040 930,1100 880,1110'],
    minor: ['800,870 860,900 880,1000 850,1100 880,1160 930,1110 940,940', '760,870 800,840', '900,940 905,1100', '30,930 180,840 240,880', '180,840 300,1000', '75,500 110,490 180,530 210,580', '190,660 190,690', '205,660 205,690', '70,590 60,640', '285,690 380,790', '200,1535 350,1430', '210,1535 320,1568', '640,650 600,690', '1440,600 1485,660 1480,700', '1385,800 1385,900 1440,940'],
    major: [
      '357,0 362,230 350,450 350,560 360,720 385,800 385,1010 408,1070', '550,0 590,30 640,70 700,45 760,42 860,60 940,82 940,60', '585,210 575,250 550,300 530,340', '362,163 560,165', '1055,40 1150,48 1180,30 1188,0', '470,608 560,597 640,600 760,625 880,638 960,610 1005,612 1045,655 1120,668 1200,670 1270,630 1285,600 1265,550 1280,510 1310,490 1390,488 1415,435',
      '135,1185 155,1185 160,1090 195,1070 205,1000 245,950 380,953 440,953', '390,1110 500,1215 550,1265 580,1305 630,1310 650,1350 680,1370', '1095,1410 1190,1450 1370,1475 1500,1485', '915,1455 925,1568', '605,1465 575,1540',
    ],
    highway: [
      '460,0 430,60 430,120 455,180 455,240 430,290 440,380 460,440 460,590 455,640 435,690 420,770 450,800 470,880 470,980 540,1090 580,1140 620,1220 715,1340 680,1380 690,1440 715,1480 705,1568', '408,1070 408,1160 440,1250 450,1300 435,1400 420,1440 420,1480 460,1568',
      '1040,0 1055,40 1045,130 1042,210 1080,300 1085,330 1058,430 1052,560 1045,680 1050,780 1080,840 1105,900 1090,960 1050,1000 1015,1060 1005,1230 1030,1330 1010,1370 970,1440 850,1450 770,1480 700,1475 655,1460 600,1475 550,1460 500,1442 430,1442', '490,835 520,860 760,863 800,850 840,865 920,910 970,920 1010,910 1100,912 1290,915 1400,960 1500,1020',
    ],
    ferry: ['50,790 260,792', '0,845 90,805 260,800', '40,1185 135,1185'],
  },
]

// Push border vertices outside the tile so shorelines are not stroked along tile edges.
function bleed(points: string, t: Tile): string {
  return points
    .split(' ')
    .map((p) => {
      const [x, y] = p.split(',').map(Number)
      const bx = x <= 0 ? -20 : x >= t.vw ? t.vw + 20 : x
      const by = y <= 0 ? -20 : y >= t.vh ? t.vh + 20 : y
      return `${bx},${by}`
    })
    .join(' ')
}

// Small terrain fragments, seeded so that every render is identical.
function scatter(seed: number, x: number, y: number, w: number, h: number, n: number, size: number, fills: string[]): Patch[] {
  let s = seed
  const rnd = () => ((s = (s * 16807) % 2147483647) / 2147483647)
  return Array.from({ length: n }, () => {
    const cx = x + rnd() * w
    const cy = y + rnd() * h
    const pts: string[] = []
    const k = rnd() > 0.5 ? 3 : 4
    const turn = rnd() * 6
    for (let i = 0; i < k; i++) {
      const a = turn + (i / k) * 6.283
      const r = size * (0.35 + rnd() * 0.9)
      pts.push(`${(cx + Math.cos(a) * r * 0.7).toFixed(1)},${(cy + Math.sin(a) * r).toFixed(1)}`)
    }
    return { d: pts.join(' '), fill: fills[Math.floor(rnd() * fills.length)] }
  })
}
const hills = ['#c6e1c2', '#cbe8c7', '#d8efd0', '#c4dfc1', '#cfeacb']
const softHills = ['#cbe6c7', '#cdeac9', '#daf0d2', '#cfeacb']
const dry = ['#efeeea', '#efeeea', '#f0efeb', '#cbe8c7']
const terrain: Record<number, Patch[]> = {
  0: [...scatter(11, 0, 0, 480, 560, 90, 42, hills), ...scatter(12, 0, 560, 220, 480, 25, 30, hills), ...scatter(13, 620, 880, 600, 170, 12, 20, dry)],
  1: [...scatter(21, 0, 100, 260, 800, 22, 18, dry), ...scatter(22, 540, 400, 200, 450, 6, 18, ['#cbe8c7', '#e7e7e7'])],
  2: [...scatter(31, 250, 250, 800, 780, 60, 20, [...dry, '#b1d9fb']), ...scatter(32, 0, 550, 280, 450, 14, 20, dry), ...scatter(33, 850, 80, 500, 300, 14, 18, dry)],
  3: [...scatter(41, 0, 650, 620, 400, 26, 18, ['#e7e7e7', '#efeeea', '#cbe8c7'])],
  4: [...scatter(51, 850, 0, 650, 1050, 90, 26, dry), ...scatter(54, 620, 0, 240, 1050, 12, 18, dry), ...scatter(52, 1350, 0, 213, 1050, 60, 44, softHills), ...scatter(53, 0, 0, 260, 1000, 26, 20, ['#e7e7e7', '#cbe8c7'])],
  5: [...scatter(61, 780, 0, 720, 600, 60, 20, dry), ...scatter(62, 1260, 100, 300, 900, 45, 44, softHills), ...scatter(63, 400, 520, 380, 400, 22, 44, ['#cbe8c7', '#c8e5c4']), ...scatter(64, 150, 50, 450, 400, 20, 18, ['#e7e7e7', '#cbe8c7']), ...scatter(65, 800, 600, 400, 400, 22, 20, dry)],
  6: [...scatter(71, 760, 0, 740, 1500, 80, 20, ['#d4edd1']), ...scatter(72, 1200, 0, 300, 400, 20, 20, ['#e7e7e7']), ...scatter(73, 200, 900, 600, 600, 22, 16, ['#d4edd1'])],
}

// text, left, right, baseline, size class
type Label = [string, number, number, number, string?]
const labels: Label[] = [
  ['Bangor', 367, 442, 111], ['Brinnon', 143, 223, 201], ['Seabeck', 240, 329, 283], ['Silverdale', 428, 530, 275],
  ['Poulsbo', 507, 593, 78], ['Indianola', 677, 773, 55], ['Suquamish', 628, 746, 88], ['Keyport', 546, 626, 152],
  ['Bainbridge', 676, 788, 306], ['Island', 702, 763, 330], ['Erlands', 425, 504, 354], ['Point-Kitsap', 400, 528, 378], ['Lake', 440, 489, 402],
  ['Hite Center', 174, 292, 368], ['Crosby', 193, 266, 411], ['Holly', 42, 94, 463], ['Belfair', 253, 320, 692], ['Bremerton', 523, 633, 447], ['Port Orchard', 498, 631, 500],
  ['Shoreline', 939, 1036, 34], ['Bothell', 1156, 1228, 25], ['Cottage Lake', 1308, 1449, 60], ['Duvall', 1480, 1544, 65], ['Lake', 1592, 1641, 161], ['Marcel-Stillwater', 1527, 1705, 184], ['Carnation', 1566, 1668, 268], ['Sammamish', 1372, 1506, 336],
  ['Fall City', 1611, 1695, 442], ['Tokul', 1720, 1776, 455], ['Issaquah', 1396, 1492, 522], ['Snoqualmie', 1683, 1810, 526], ['North Bend', 1743, 1862, 597], ['Tanner', 1825, 1899, 641],
  ['Newcastle', 1200, 1311, 506], ['Tukwila', 1053, 1133, 642], ['Burien', 962, 1028, 659], ['SeaTac', 1020, 1099, 709],
  ['Kirkland', 1141, 1240, 207, 'town'], ['Redmond', 1256, 1373, 213, 'town'], ['Bellevue', 1141, 1254, 353, 'town'], ['Renton', 1145, 1231, 632, 'town'], ['Seattle', 955, 1060, 362, 'city'],
  ['Tiger', 1516, 1579, 587, 'forest'], ['Mountain', 1490, 1606, 614.5, 'forest'], ['State Forest', 1474, 1624, 642, 'forest'],
]
const routes: [string, number, number][] = [
  ['3', 485, 197], ['305', 594, 113], ['303', 574, 307], ['305', 862, 352.5], ['304', 766, 432], ['160', 861, 535], ['160', 659, 569], ['16', 569, 607], ['3', 425, 540],
  ['522', 1052, 126], ['520', 1181, 273], ['99', 1028, 535], ['169', 1343, 659], ['202', 1477, 278], ['202', 1575, 403], ['203', 1632, 388], ['18', 1564.5, 669],
]
const interstates: [string, number, number, number][] = [
  ['5', 1018, 195, 26], ['5', 1025, 422, 26], ['90', 1264, 407.5, 30], ['405', 1203, 568, 40], ['90', 1922.5, 666, 30],
]
const pins: [number, number][] = [[1063, 37], [973, 125], [939, 165], [1003, 155], [1033, 179], [987, 273], [987, 279], [1001, 373], [1085, 411], [1031, 463]]

const googleLetters: [string, string][] = [['G', '#4f86ec'], ['o', '#d95040'], ['o', '#f2bd42'], ['g', '#4f86ec'], ['l', '#58a55c'], ['e', '#d95040']]

const icons = {
  home: 'M10 20v-6h4v6h5v-8h3L12 3 2 12h3v8z',
  bar: 'M21 5V3H3v2l8 9v5H6v2h12v-2h-5v-5l8-9zM7.43 7L5.66 5h12.69l-1.78 2H7.43z',
  cup: 'M20 3H4v10c0 2.21 1.79 4 4 4h6c2.21 0 4-1.79 4-4v-3h2c1.11 0 2-.9 2-2V5c0-1.11-.89-2-2-2zm0 5h-2V5h2v3zM4 19h16v2H4z',
  grid: 'M20 2H4c-1.1 0-2 .9-2 2v16c0 1.1.9 2 2 2h16c1.1 0 2-.9 2-2V4c0-1.1-.9-2-2-2zM8 20H4v-4h4v4zm0-6H4v-4h4v4zm0-6H4V4h4v4zm6 12h-4v-4h4v4zm0-6h-4v-4h4v4zm0-6h-4V4h4v4zm6 12h-4v-4h4v4zm0-6h-4v-4h4v4zm0-6h-4V4h4v4z',
  place: 'M12 2C8.13 2 5 5.13 5 9c0 5.25 7 13 7 13s7-7.75 7-13c0-3.87-3.13-7-7-7zm0 9.5c-1.38 0-2.5-1.12-2.5-2.5s1.12-2.5 2.5-2.5 2.5 1.12 2.5 2.5-1.12 2.5-2.5 2.5z',
  menu: 'M3 18h18v-2H3v2zm0-5h18v-2H3v2zm0-7v2h18V6H3z',
}
</script>

<template>
  <div class="page">
    <header class="bar">
      <a class="logo">drinkME</a>
      <nav>
        <svg v-for="d in [icons.home, icons.bar, icons.cup]" :key="d" viewBox="0 0 24 24"><path :d="d" /></svg>
      </nav>
    </header>

    <main>
      <h1>Search a city or zip code to discover breweries in your area.</h1>

      <form class="search" @submit.prevent>
        <svg class="prefix" viewBox="0 0 24 24"><path :d="icons.cup" /></svg>
        <div class="field">
          <label>Find a brewery</label>
          <div class="value">seattle</div>
        </div>
        <button type="submit">SEARCH</button>
      </form>

      <div class="tabs">
        <div class="tab">
          <svg viewBox="0 0 24 24"><path :d="icons.grid" /></svg><span>LIST VIEW</span>
        </div>
        <div class="tab active">
          <svg viewBox="0 0 24 24"><path :d="icons.place" /></svg><span>MAP VIEW</span>
        </div>
      </div>

      <section class="map">
        <svg class="canvas" viewBox="0 0 2016 700">
          <rect width="2016" height="700" fill="#d4edd1" />
          <svg v-for="(t, i) in tiles" :key="i" :x="t.x" :y="t.y" :width="t.w" :height="t.h" :viewBox="`0 0 ${t.vw} ${t.vh}`" preserveAspectRatio="none">
            <polygon v-for="p in t.urban" :key="p" :points="p" fill="#e7e7e7" />
            <polygon v-for="p in t.park" :key="p" :points="p" :fill="i === 6 ? '#d4edd1' : '#cbe8c7'" />
            <polygon v-for="p in t.sand" :key="p" :points="p" fill="#efeeea" />
            <polygon v-for="p in terrain[i]" :key="p.d" :points="p.d" :fill="p.fill" opacity=".7" />
            <polygon v-for="p in t.dark" :key="p" :points="p" fill="#c0dfbc" />
            <path v-if="t.streets" :d="t.streets" class="street" />
            <polygon v-for="p in t.water" :key="p" :points="bleed(p, t)" class="water" />
            <path v-if="t.canal" :d="t.canal" class="canal" :class="{ wide: i === 6 }" />
            <polygon v-for="p in t.isle" :key="p" :points="p" fill="#e7e7e7" />
            <polygon v-for="p in t.islePark" :key="p" :points="p" fill="#cde8c8" />
            <polyline v-for="p in t.minor" :key="p" :points="p" class="minor" />
            <polyline v-for="p in t.ferry" :key="p" :points="p" class="ferry" />
            <polyline v-for="p in t.major" :key="'a' + p" :points="p" class="major-case" />
            <polyline v-for="p in t.highway" :key="'a' + p" :points="p" class="hw-case" />
            <polyline v-for="p in t.major" :key="'b' + p" :points="p" class="major" />
            <polyline v-for="p in t.highway" :key="'b' + p" :points="p" class="hw" />
          </svg>

          <text class="label bay" transform="translate(286 68) rotate(-75)">Dabob Bay</text>
          <text v-for="(l, i) in labels" :key="i" class="label" :class="l[4]" :x="l[1] - 1" :y="l[3]" :textLength="l[2] - l[1]">{{ l[0] }}</text>

          <g v-for="(r, i) in routes" :key="'r' + i" :transform="`translate(${r[1]} ${r[2]})`">
            <rect :x="r[0].length > 2 ? -20 : -16" y="-13" :width="r[0].length > 2 ? 40 : 32" height="26" rx="12" class="oval" />
            <text class="num" y="6.5">{{ r[0] }}</text>
          </g>
          <g transform="translate(194 123)">
            <path class="oval" d="M-15-14Q-7-10 0-14Q7-10 15-14L20-9Q16-5 19 1Q22 12 13 14Q4 14 0 16Q-4 14-13 14Q-22 12-19 1Q-16-5-20-9Z" />
            <text class="num" y="8.5">101</text>
          </g>
          <g v-for="(s, i) in interstates" :key="'s' + i" :transform="`translate(${s[1]} ${s[2]})`">
            <path :d="`M${-s[3] / 2} -9V-5Q${-s[3] / 2} 10 0 15Q${s[3] / 2} 10 ${s[3] / 2} -5V-9Z`" fill="#4a7bc2" />
            <path :d="`M${-s[3] / 2} -10V-13L${-s[3] / 2 + 2} -16Q${-s[3] / 4} -13 0 -16Q${s[3] / 4} -13 ${s[3] / 2 - 2} -16L${s[3] / 2} -13V-10Z`" fill="#c96562" />
            <path :d="`M${-s[3] / 2} -9.5H${s[3] / 2}`" stroke="#fff" stroke-width="1.5" />
            <text class="num inter" y="7.5">{{ s[0] }}</text>
          </g>

          <g v-for="(p, i) in pins" :key="'p' + i" :transform="`translate(${p[0]} ${p[1]})`">
            <path class="pin" d="M0 57C-2 57-2 52-2.600 48C-6 28-25 20-25 0A25 25 0 0 1 25 0C25 20 6 28 2.600 48C2 52 2 57 0 57Z" />
            <circle r="9" fill="#771d18" />
          </g>

          <text class="google" x="13" y="684" textLength="124"><tspan v-for="(g, i) in googleLetters" :key="i" :fill="g[1]">{{ g[0] }}</tspan></text>
        </svg>

        <div class="zoom">
          <svg viewBox="0 0 80 80"><path d="M22 36.500H36.500V22H43.500V36.500H58V43.500H43.500V58H36.500V43.500H22Z" /></svg>
          <i></i>
          <svg viewBox="0 0 80 80"><path d="M22 36H58V43.500H22Z" /></svg>
        </div>
        <div class="legal"><span>Map data ©2020 Google</span><span>Terms of Use</span><span>Report a map error</span></div>
      </section>
    </main>

    <footer>
      <div class="col brand">
        <h2>drinkME</h2>
        <p>Here for a good time! Cheers!</p>
      </div>
      <div class="col built">
        <h3>Built With:</h3>
        <p>TheCocktailDb</p>
      </div>
      <div class="col author">
        <h3>Created by:</h3>
        <p>Derek</p>
      </div>
    </footer>

    <button class="fab" aria-label="Menu"><svg viewBox="0 0 24 24"><path :d="icons.menu" /></svg></button>
  </div>
</template>

<style>
body {
  overflow: hidden;
  background: #fff;
}
</style>

<style scoped>
.page {
  position: relative;
  width: 2880px;
  height: 1644px;
  overflow: hidden;
  background: #fff;
  font-family: Roboto, sans-serif;
  display: flex;
  flex-direction: column;
}
.page * {
  box-sizing: border-box;
}
.bar {
  flex: none;
  height: 130px;
  padding: 2px 70px 0;
  display: flex;
  justify-content: space-between;
  align-items: center;
  background: #212121;
  border-top: 2px solid #2a2a2a;
  border-bottom: 2px solid #e4e4e4;
  box-shadow: 0 4px 4px rgba(0, 0, 0, 0.18), 0 2px 10px rgba(0, 0, 0, 0.2), 0 6px 2px -4px rgba(0, 0, 0, 0.2);
}
.logo {
  color: #fff;
  font: 300 62px/90px Inter, sans-serif;
  height: 92px;
  white-space: nowrap;
  letter-spacing: -0.2px;
  text-decoration: underline;
  text-decoration-thickness: 6px;
  text-underline-offset: 5px;
  text-decoration-skip-ink: none;
}
nav {
  display: flex;
  gap: 60px;
}
nav svg {
  width: 48px;
  height: 48px;
  fill: #e6e6e6;
}
main {
  flex: none;
  height: 1338px;
  width: 2016px;
  margin-left: 432px;
}
h1 {
  margin: 65px 0 0;
  height: 54px;
  font: 300 35px/54px Inter, sans-serif;
  letter-spacing: 0.65px;
  color: #424242;
  white-space: nowrap;
}
.search {
  margin-top: 51px;
  height: 116px;
  display: flex;
}
.prefix {
  width: 61px;
  height: 61px;
  margin: 50px 30px 0 -7.500px;
  fill: #212121;
}
.field {
  width: 1070px;
}
label {
  display: block;
  height: 24px;
  padding-left: 22px;
  font-size: 24.500px;
  letter-spacing: 0.15px;
  line-height: 30px;
  color: #9e9e9e;
  position: relative;
  z-index: 1;
}
.value {
  height: 92px;
  background: #e8effd;
  border-bottom: 2px solid #9e9e9e;
  font-size: 32px;
  line-height: 90px;
  color: #000;
}
.search button {
  margin: 30px 0 0 46px;
  width: 176px;
  height: 72px;
  border: 0;
  border-radius: 4px;
  background: #9a441d;
  color: #fff;
  font: 400 28px/74px Roboto, sans-serif;
  letter-spacing: 1px;
  padding: 0;
  box-shadow: 0 4px 4px rgba(0, 0, 0, 0.18), 0 6px 2px -4px rgba(0, 0, 0, 0.12), 0 2px 10px rgba(0, 0, 0, 0.2);
}
.tabs {
  margin: 126px 0 0 1008px;
  height: 96px;
  display: flex;
}
.tab {
  width: 492px;
  padding-left: 48px;
  display: flex;
  align-items: center;
  gap: 12px;
  color: #bd7b60;
  font-size: 28px;
}
.tab svg {
  width: 48px;
  height: 48px;
  fill: currentColor;
}
.tab.active {
  width: 494px;
  padding-left: 49px;
  background: #ead9d2;
  color: #b57054;
  box-shadow: inset 0 -4px #9c3f1c;
}
.map {
  position: relative;
  height: 700px;
  overflow: hidden;
}
.canvas {
  display: block;
  width: 2016px;
  height: 700px;
}
.canvas polyline,
.street,
.canal {
  fill: none;
  stroke-linejoin: round;
  stroke-linecap: round;
  vector-effect: non-scaling-stroke;
}
.street {
  stroke: #fff;
  stroke-width: 2;
}
.minor {
  stroke: #fff;
  stroke-width: 2.2px;
}
.water {
  fill: #b1d9fb;
  stroke: #e3eae8;
  stroke-width: 1px;
  vector-effect: non-scaling-stroke;
}
.canal {
  stroke: #b1d9fb;
  stroke-width: 1.2px;
}
.canal.wide {
  stroke-width: 4px;
}
.canvas .ferry {
  stroke: #9fbef0;
  stroke-width: 1.6px;
  stroke-dasharray: 11 6;
  stroke-linecap: butt;
}
.major-case {
  stroke: #f0cf78;
  stroke-width: 6px;
}
.major {
  stroke: #fde9a9;
  stroke-width: 3.6px;
}
.hw-case {
  stroke: #f0cf78;
  stroke-width: 7px;
}
.hw {
  stroke: #fde9a9;
  stroke-width: 4.6px;
}
.label {
  font-size: 24px;
  fill: #5b5f63;
  stroke: rgba(255, 255, 255, 0.75);
  stroke-width: 4px;
  stroke-linejoin: round;
  paint-order: stroke;
}
.label.town {
  font-size: 27px;
  fill: #444;
}
.label.city {
  font-size: 33px;
  font-weight: 500;
  fill: #383838;
}
.label.forest {
  font-size: 27px;
  fill: #3d8148;
}
.label.bay {
  font-size: 23.500px;
  fill: #5b86cf;
  stroke: none;
}
.oval {
  fill: #fff;
  stroke: #696969;
  stroke-width: 2px;
}
.num {
  font-size: 18px;
  text-anchor: middle;
  fill: #333;
}
.num.inter {
  fill: #fff;
  font-weight: 700;
}
.pin {
  fill: #d95040;
  stroke: #fff;
  stroke-width: 1.500px;
}
.google {
  font: 600 39px 'Open Sans', sans-serif;
  stroke: rgba(255, 255, 255, 0.6);
  stroke-width: 6px;
  paint-order: stroke;
}
.zoom {
  position: absolute;
  left: 1916px;
  top: 490px;
  width: 80px;
  height: 162px;
  background: #fff;
  border-radius: 4px;
  box-shadow: 0 2px 6px rgba(0, 0, 0, 0.3);
  display: flex;
  flex-direction: column;
  align-items: center;
}
.zoom svg {
  width: 80px;
  height: 80px;
  fill: #666;
}
.zoom i {
  width: 60px;
  height: 2px;
  background: #e6e6e6;
}
.legal {
  position: absolute;
  right: 0;
  bottom: 0;
  height: 28px;
  display: flex;
  gap: 2px;
  font-size: 20px;
  line-height: 27px;
  color: #444;
}
.legal span {
  width: 190px;
  text-align: center;
  white-space: nowrap;
  background: rgba(245, 245, 245, 0.7);
}
.legal span:nth-child(1) {
  width: 241px;
}
.legal span:nth-child(2) {
  width: 141px;
}
footer {
  flex: none;
  height: 176px;
  padding-left: 455px;
  display: flex;
  background: #212121;
  color: #fff;
}
.brand {
  width: 839px;
}
.built {
  width: 840px;
}
h2,
h3,
footer p {
  margin: 0;
  white-space: nowrap;
}
h2 {
  padding-top: 62px;
  font: 300 48px/72px Inter, sans-serif;
}
h3 {
  padding-top: 52px;
  font: 300 35px/54px Inter, sans-serif;
  letter-spacing: -0.3px;
}
.author h3 {
  letter-spacing: 0.9px;
}
footer p {
  font-size: 30px;
  line-height: 36px;
  padding-top: 28px;
  color: #eee;
}
.brand p {
  padding-top: 25px;
}
.fab {
  position: absolute;
  left: 2722px;
  top: 1486px;
  width: 112px;
  height: 112px;
  border: 0;
  border-radius: 50%;
  background: #2f0a04;
  display: flex;
  align-items: center;
  justify-content: center;
  box-shadow: 0 4px 6px rgba(0, 0, 0, 0.3);
}
.fab svg {
  width: 48px;
  height: 48px;
  fill: #fff;
}
</style>
